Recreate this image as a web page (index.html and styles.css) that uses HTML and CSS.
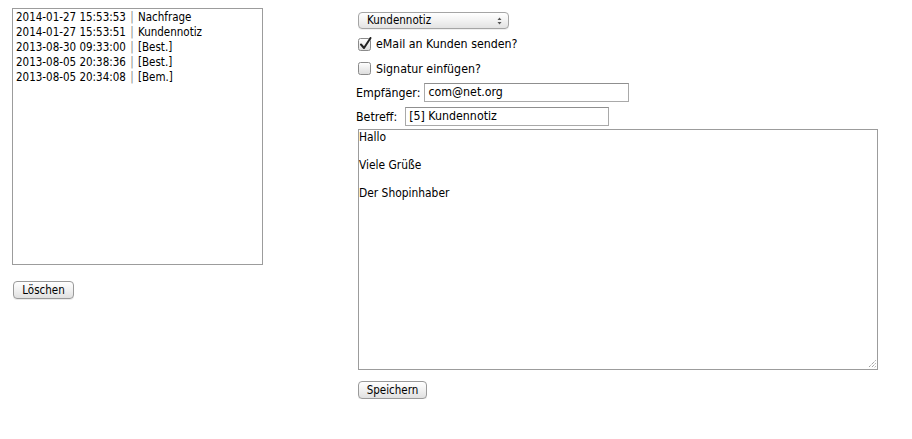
FILE: index.html
```html
<!DOCTYPE html>
<html>
<head>
<meta charset="utf-8">
<link rel="stylesheet" href="styles.css">
</head>
<body>
<div class="page">
  <div class="left">
    <div class="listbox">
      <div class="opt">2014-01-27 15:53:53 <span class="sep">|</span> Nachfrage</div>
      <div class="opt">2014-01-27 15:53:51 <span class="sep">|</span> Kundennotiz</div>
      <div class="opt">2013-08-30 09:33:00 <span class="sep">|</span> [Best.]</div>
      <div class="opt">2013-08-05 20:38:36 <span class="sep">|</span> [Best.]</div>
      <div class="opt">2013-08-05 20:34:08 <span class="sep">|</span> [Bem.]</div>
    </div>
    <button class="btn btn-del">Löschen</button>
  </div>
  <div class="right">
    <div class="select">
      <span>Kundennotiz</span>
      <svg class="arrows" width="5" height="8" viewBox="0 0 5 8"><path d="M0.5 3 L2.5 0.5 L4.5 3 Z M0.5 5 L2.5 7.5 L4.5 5 Z" fill="#555"/></svg>
    </div>
    <label class="check row1">
      <svg class="cb" width="14" height="14" viewBox="0 0 14 14">
        <defs><linearGradient id="g1" x1="0" y1="0" x2="0" y2="1"><stop offset="0" stop-color="#ffffff"/><stop offset="1" stop-color="#dcdcdc"/></linearGradient></defs>
        <rect x="0.5" y="1.5" width="12" height="12" rx="2" fill="url(#g1)" stroke="#8a8a8a"/>
        <path d="M3 7.5 L6 11 L12.5 1" fill="none" stroke="#222" stroke-width="2" stroke-linecap="round" stroke-linejoin="round"/>
      </svg>
      <span>eMail an Kunden senden?</span>
    </label>
    <label class="check row2">
      <svg class="cb" width="14" height="14" viewBox="0 0 14 14">
        <defs><linearGradient id="g2" x1="0" y1="0" x2="0" y2="1"><stop offset="0" stop-color="#ffffff"/><stop offset="1" stop-color="#dcdcdc"/></linearGradient></defs>
        <rect x="0.5" y="0.5" width="12" height="12" rx="2" fill="url(#g2)" stroke="#8a8a8a"/>
      </svg>
      <span>Signatur einfügen?</span>
    </label>
    <div class="field f1">
      <span class="lbl">Empfänger:</span>
      <div class="input in1">com@net.org</div>
    </div>
    <div class="field f2">
      <span class="lbl">Betreff:</span>
      <div class="input in2">[5] Kundennotiz</div>
    </div>
    <div class="textarea">
      <div>Hallo</div>
      <div>&nbsp;</div>
      <div>Viele Grüße</div>
      <div>&nbsp;</div>
      <div>Der Shopinhaber</div>
      <svg class="grip" width="9" height="9" viewBox="0 0 9 9"><path d="M8.5 1.5 L1.5 8.5 M8.5 4.5 L4.5 8.5 M8.5 7.5 L7.5 8.5" stroke="#777" stroke-width="1" stroke-dasharray="1 1"/></svg>
    </div>
    <button class="btn btn-save">Speichern</button>
  </div>
</div>
</body>
</html>
```
FILE: styles.css
```css
html, body {
  margin: 0;
  padding: 0;
  background: #ffffff;
}
body {
  font-family: "DejaVu Sans Condensed", "DejaVu Sans", sans-serif;
  font-size: 11.5px;
  color: #000;
}
.page {
  display: flex;
  align-items: flex-start;
  padding: 8px 0 0 12px;
}
.left {
  width: 344px;
  display: flex;
  flex-direction: column;
  align-items: flex-start;
}
.listbox {
  box-sizing: border-box;
  width: 251px;
  height: 257px;
  border: 1px solid #9c9c9c;
  padding: 1px 3px;
  line-height: 15px;
}
.opt {
  white-space: nowrap;
}
.sep {
  color: #888;
  padding: 0 1px;
}
.btn {
  box-sizing: border-box;
  height: 18px;
  border: 1px solid #9a9a9a;
  border-radius: 4px;
  background: linear-gradient(#ffffff, #f1f1f1 50%, #e0e0e0);
  font-family: inherit;
  font-size: 11.5px;
  color: #000;
  padding: 0 7px;
  line-height: 16px;
  box-shadow: 0 1px 0 rgba(0,0,0,0.08);
}
.btn-del {
  margin-top: 16px;
  margin-left: 1px;
  width: 61px;
}
.right {
  display: flex;
  flex-direction: column;
  align-items: flex-start;
  font-size: 12.3px;
}
.select {
  box-sizing: border-box;
  margin: 4px 0 0 2px;
  width: 151px;
  height: 17px;
  border: 1px solid #a5a5a5;
  border-radius: 4px;
  background: linear-gradient(#ffffff, #f2f2f2 50%, #e3e3e3);
  display: flex;
  align-items: center;
  justify-content: space-between;
  padding: 0 6px 0 8px;
  line-height: 15px;
  font-size: 11.5px;
  box-shadow: 0 1px 0 rgba(0,0,0,0.06);
}
.arrows {
  display: block;
}
.check {
  display: flex;
  align-items: center;
  margin-left: 2px;
  height: 14px;
  line-height: 14px;
}
.cb {
  display: block;
  margin-right: 4px;
}
.row1 {
  margin-top: 8px;
}
.row2 {
  margin-top: 11px;
}
.field {
  display: flex;
  align-items: center;
  height: 19px;
}
.f1 {
  margin-top: 7px;
}
.f2 {
  margin-top: 5px;
}
.lbl {
  margin-right: 6px;
}
.input {
  box-sizing: border-box;
  height: 19px;
  border: 1px solid #a9a9a9;
  border-top-color: #8f8f8f;
  padding: 0 3px;
  line-height: 17px;
}
.in1 {
  width: 205px;
  margin-left: -2px;
}
.in2 {
  width: 204px;
  margin-left: 2px;
}
.textarea {
  position: relative;
  box-sizing: border-box;
  margin: 3px 0 0 2px;
  width: 520px;
  height: 241px;
  border: 1px solid #9c9c9c;
  padding: 0 0;
  line-height: 14px;
  font-size: 11.9px;
}
.grip {
  position: absolute;
  right: 1px;
  bottom: 1px;
}
.btn-save {
  margin: 11px 0 0 2px;
  width: 69px;
}
```
